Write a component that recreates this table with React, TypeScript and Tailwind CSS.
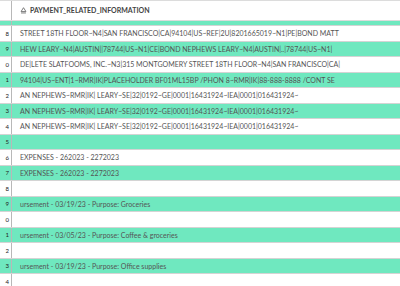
const ROWS: { n: string; text: string }[] = [
  { n: '8', text: 'STREET 18TH FLOOR~N4|SAN FRANCISCO|CA|94104|US~REF|2U|8201665019~N1|PE|BOND MATT' },
  { n: '9', text: 'HEW LEARY~N4|AUSTIN||78744|US~N1|CE|BOND NEPHEWS LEARY~N4|AUSTIN|..|78744|US~N1|' },
  { n: '0', text: 'DE|LETE SLATFOOMS, INC.~N3|315 MONTGOMERY STREET 18TH FLOOR~N4|SAN FRANCISCO|CA|' },
  { n: '1', text: '94104|US~ENT|1~RMR|IK|PLACEHOLDER BF01ML15BP /PHON 8~RMR|IK|88-888-8888 /CONT SE' },
  { n: '2', text: 'AN NEPHEWS~RMR|IK| LEARY~SE|32|0192~GE|0001|16431924~IEA|0001|016431924~' },
  { n: '3', text: 'AN NEPHEWS~RMR|IK| LEARY~SE|32|0192~GE|0001|16431924~IEA|0001|016431924~' },
  { n: '4', text: 'AN NEPHEWS~RMR|IK| LEARY~SE|32|0192~GE|0001|16431924~IEA|0001|016431924~' },
  { n: '5', text: '' },
  { n: '6', text: 'EXPENSES - 262023 - 2272023' },
  { n: '7', text: 'EXPENSES - 262023 - 2272023' },
  { n: '8', text: '' },
  { n: '9', text: 'ursement - 03/19/23 - Purpose: Groceries' },
  { n: '0', text: '' },
  { n: '1', text: 'ursement - 03/05/23 - Purpose: Coffee & groceries' },
  { n: '2', text: '' },
  { n: '3', text: 'ursement - 03/19/23 - Purpose: Office supplies' },
  { n: '4', text: '' },
]

function Row({ n, text, green }: { n: string; text: string; green: boolean }) {
  return (
    <div
      className={`flex h-[15.5px] shrink-0 items-center border-b border-[#d4d4d4] ${
        green ? 'bg-[#6fe8bf]' : 'bg-white'
      }`}
    >
      <div className="flex h-full w-[12px] shrink-0 items-center justify-end border-r border-[#b8b8b8] pr-[2px] text-[6px] text-[#222]">
        {n}
      </div>
      <div className="whitespace-nowrap pl-[8px] text-[7px] text-[#555]">{text}</div>
    </div>
  )
}

export default function App() {
  return (
    <div
      className="flex h-[286px] w-[400px] flex-col overflow-hidden bg-white"
      style={{ fontFamily: 'Lato, "Noto Sans", sans-serif' }}
    >
      <div className="flex h-[21px] shrink-0 border-y border-[#dcdcdc] bg-white">
        <div className="w-[12px] shrink-0 border-r border-[#b8b8b8]" />
        <div className="flex items-center gap-[3px] pl-[8px] text-[7px] font-bold text-[#444]">
          <svg width="7" height="7" viewBox="0 0 10 10" fill="none" stroke="#666" strokeWidth="1.2">
            <path d="M5 1 L8.5 6.5 H1.5 Z" />
            <path d="M1.5 8.5 H8.5" />
          </svg>
          PAYMENT_RELATED_INFORMATION
        </div>
      </div>
      <div className="flex flex-col overflow-hidden">
        <div className="-mt-[10.5px]">
          <Row n="" text="" green />
        </div>
        {ROWS.map((r, i) => (
          <Row key={i} n={r.n} text={r.text} green={i % 2 === 1} />
        ))}
      </div>
    </div>
  )
}
